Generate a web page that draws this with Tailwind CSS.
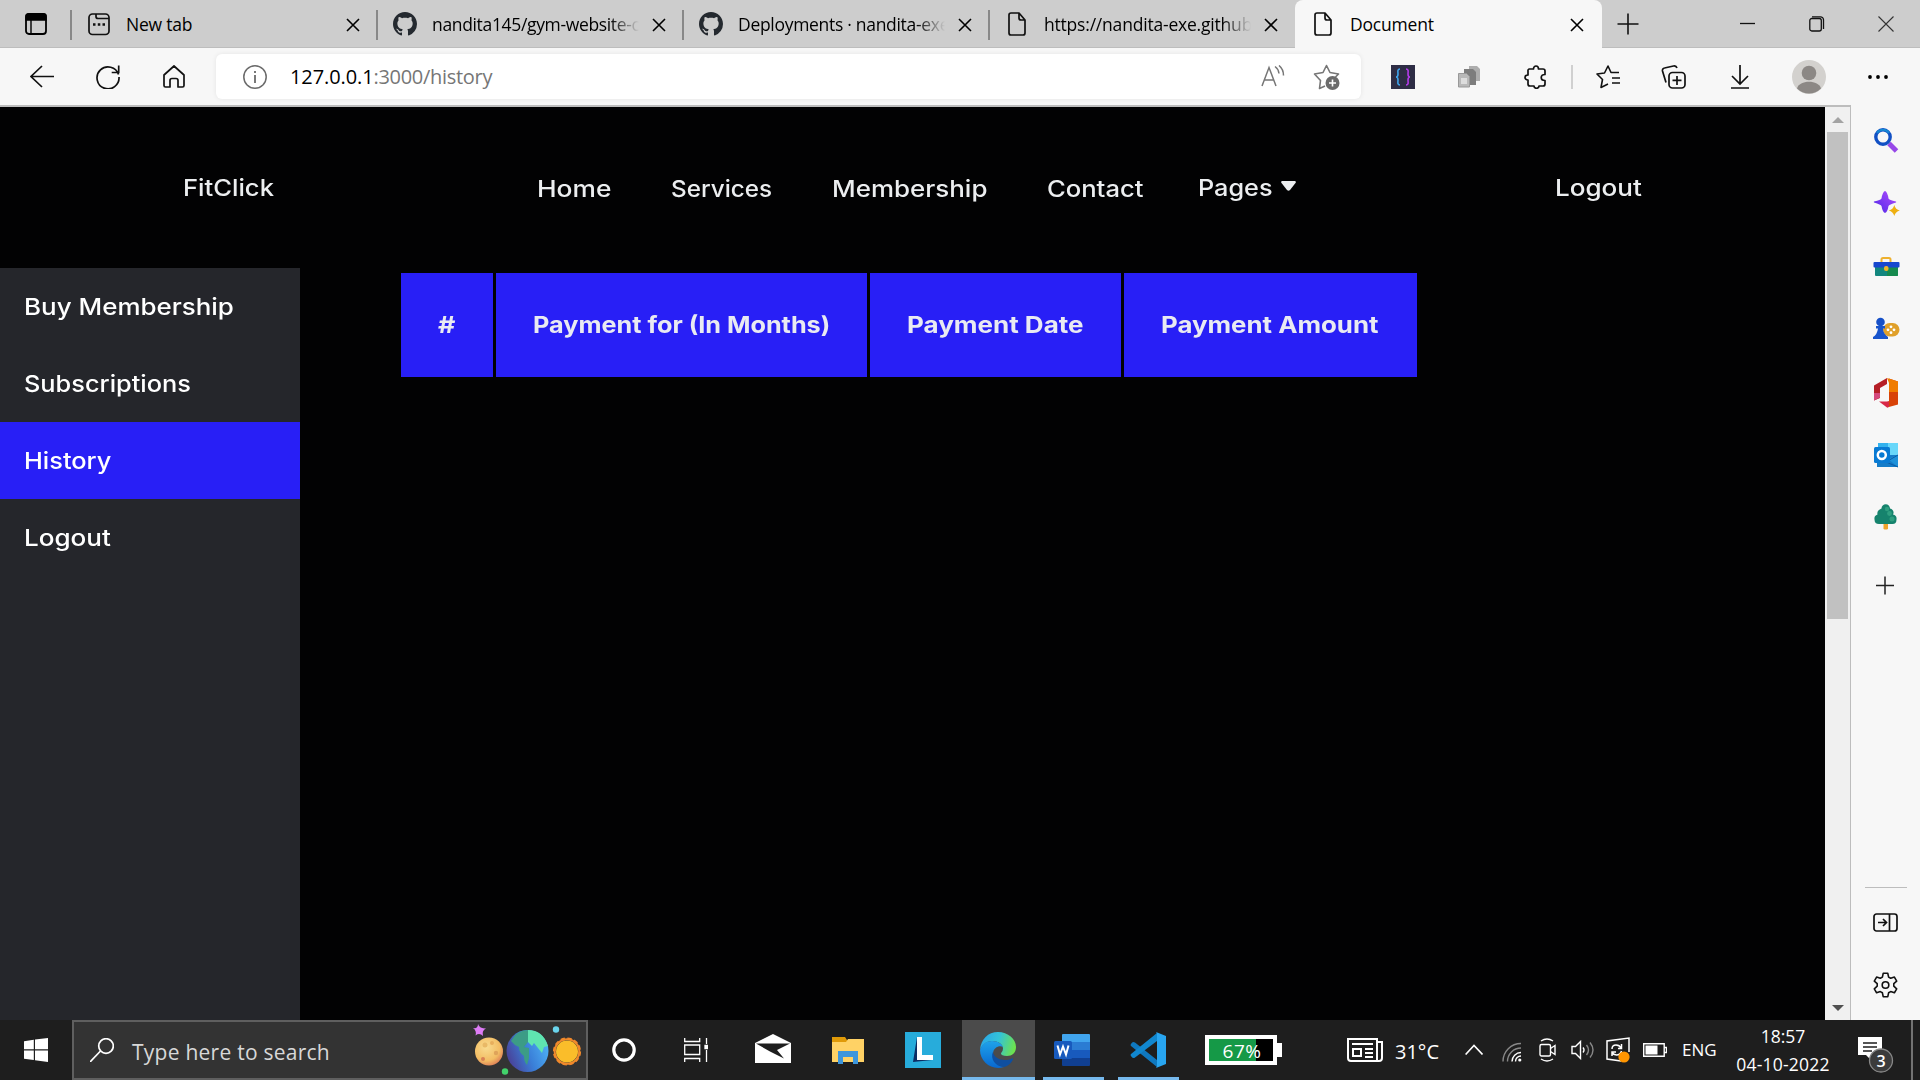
<!DOCTYPE html>
<html lang="en">
<head>
<meta charset="utf-8">
<title>Document</title>
<script src="https://cdn.jsdelivr.net/npm/@tailwindcss/browser@4"></script>
</head>
<body class="w-[1920px] h-[1080px] overflow-hidden bg-[#f7f7f7] flex flex-col font-['Open_Sans',sans-serif] text-black">
<svg class="hidden">
  <symbol id="x" viewBox="0 0 14 14"><path d="M1 1l12 12M13 1L1 13" stroke="currentColor" stroke-width="1.6" fill="none"/></symbol>
  <symbol id="gh" viewBox="0 0 16 16"><path fill="#24292f" d="M8 0C3.58 0 0 3.58 0 8c0 3.54 2.29 6.53 5.47 7.59.4.07.55-.17.55-.38 0-.19-.01-.82-.01-1.49-2.01.37-2.53-.49-2.69-.94-.09-.23-.48-.94-.82-1.13-.28-.15-.68-.52-.01-.53.63-.01 1.08.58 1.23.82.72 1.21 1.87.87 2.33.66.07-.52.28-.87.51-1.07-1.78-.2-3.64-.89-3.64-3.95 0-.87.31-1.59.82-2.15-.08-.2-.36-1.02.08-2.12 0 0 .67-.21 2.2.82.64-.18 1.32-.27 2-.27.68 0 1.36.09 2 .27 1.53-1.04 2.2-.82 2.2-.82.44 1.1.16 1.92.08 2.12.51.56.82 1.27.82 2.15 0 3.07-1.87 3.75-3.65 3.95.29.25.54.73.54 1.48 0 1.07-.01 1.93-.01 2.2 0 .21.15.46.55.38A8.013 8.013 0 0016 8c0-4.42-3.58-8-8-8z"/></symbol>
  <symbol id="doc" viewBox="0 0 24 24"><path d="M14 1H6a2 2 0 0 0-2 2v18a2 2 0 0 0 2 2h12a2 2 0 0 0 2-2V8zM14 1v5a2 2 0 0 0 2 2h4" stroke="#111" stroke-width="1.7" fill="none" stroke-linejoin="round"/></symbol>
</svg>

<!-- Tab strip -->
<div class="h-12 shrink-0 bg-[#cdcdcd] flex items-center border-b border-[#bdbdbd]">
  <svg class="w-6 h-6 ml-6 shrink-0" viewBox="0 0 24 24"><rect x="2" y="2" width="20" height="20" rx="3" fill="none" stroke="#000" stroke-width="1.8"/><path d="M2 8V4a2 2 0 0 1 2-2h16a2 2 0 0 1 2 2v4zM7 8v14" stroke="#000" stroke-width="1.4"/></svg>
  <div class="w-0.5 h-[30px] ml-[22px] bg-[#888] mt-0.5 shrink-0"></div>
  <div class="w-[304px] shrink-0 flex items-center pl-[15px]">
    <svg class="w-6 h-6 shrink-0" viewBox="0 0 24 24" fill="none" stroke="#111" stroke-width="1.7"><rect x="2" y="2" width="20" height="20.5" rx="3.5"/><path d="M9 2v2.500a2 2 0 0 0 2 2h11"/><path d="M6 12.500h2.500M10.800 12.500h2.500M15.500 12.500h2.500" stroke-width="2.600"/></svg>
    <div class="ml-[15px] w-[207px] overflow-hidden whitespace-nowrap text-[17.5px] leading-6 tracking-[-0.2px]">New tab</div>
    <svg class="w-3.5 h-3.5 ml-[13px] mt-0.5 shrink-0"><use href="#x"/></svg>
  </div>
  <div class="w-0.5 h-[30px] bg-[#888] mt-0.5 shrink-0"></div>
  <div class="w-[304px] shrink-0 flex items-center pl-[15px]">
    <svg class="w-6 h-6 shrink-0"><use href="#gh"/></svg>
    <div class="ml-[15px] w-[207px] overflow-hidden whitespace-nowrap text-[17.5px] leading-6 tracking-[-0.34px] [mask-image:linear-gradient(to_right,black_86%,transparent)]">nandita145/gym-website-c</div>
    <svg class="w-3.5 h-3.5 ml-[13px] mt-0.5 shrink-0"><use href="#x"/></svg>
  </div>
  <div class="w-0.5 h-[30px] bg-[#888] mt-0.5 shrink-0"></div>
  <div class="w-[304px] shrink-0 flex items-center pl-[15px]">
    <svg class="w-6 h-6 shrink-0"><use href="#gh"/></svg>
    <div class="ml-[15px] w-[207px] overflow-hidden whitespace-nowrap text-[17.5px] leading-6 tracking-[-0.3px] [mask-image:linear-gradient(to_right,black_86%,transparent)]">Deployments · nandita-exe</div>
    <svg class="w-3.5 h-3.5 ml-[13px] mt-0.5 shrink-0"><use href="#x"/></svg>
  </div>
  <div class="w-0.5 h-[30px] bg-[#888] mt-0.5 shrink-0"></div>
  <div class="w-[305px] shrink-0 flex items-center pl-[15px]">
    <svg class="w-6 h-6 shrink-0"><use href="#doc"/></svg>
    <div class="ml-[15px] w-[207px] overflow-hidden whitespace-nowrap text-[17.5px] leading-6 tracking-[-0.2px] [mask-image:linear-gradient(to_right,black_86%,transparent)]">https://nandita-exe.github</div>
    <svg class="w-3.5 h-3.5 ml-[13px] mt-0.5 shrink-0"><use href="#x"/></svg>
  </div>
  <div class="w-[307px] h-12 shrink-0 flex items-center pl-4 bg-[#f7f7f7] rounded-t-lg">
    <svg class="w-6 h-6 shrink-0"><use href="#doc"/></svg>
    <div class="ml-[15px] w-[207px] overflow-hidden whitespace-nowrap text-[17.5px] leading-6 tracking-[-0.2px]">Document</div>
    <svg class="w-3.5 h-3.5 ml-[13px] mt-0.5 shrink-0"><use href="#x"/></svg>
  </div>
  <svg class="w-[22px] h-[22px] ml-[15px] shrink-0" viewBox="0 0 22 22"><path d="M11 .5v21M.5 11h21" stroke="#111" stroke-width="1.600"/></svg>
  <svg class="w-4 h-4 ml-[101px] shrink-0" viewBox="0 0 16 16"><path d="M0 7.500h15" stroke="#111" stroke-width="1.300"/></svg>
  <svg class="w-4 h-4 ml-[53px] shrink-0" viewBox="0 0 16 16" fill="none" stroke="#111" stroke-width="1.300"><rect x=".8" y="2.500" width="11.500" height="12.500" rx="2"/><path d="M3 .8h8.500a3 3 0 0 1 3 3V13"/></svg>
  <svg class="w-4 h-4 ml-[53px] shrink-0" viewBox="0 0 16 16"><path d="M.5.5l15 15M15.500.5l-15 15" stroke="#333" stroke-width="1.100"/></svg>
</div>

<!-- Toolbar -->
<div class="h-[57px] shrink-0 bg-[#f7f7f7] flex items-center">
  <svg class="w-6 h-6 ml-[30px] shrink-0" viewBox="0 0 24 24" fill="none" stroke="#111" stroke-width="1.700"><path d="M24 11.500H1M12 1L1 11.500 12 22"/></svg>
  <svg class="w-6 h-6 ml-[42px] shrink-0" viewBox="0 0 24 24" fill="none" stroke="#111" stroke-width="1.700"><path d="M22.500 9.500A11 11 0 1 0 23 12M22.700.5v7h-7"/></svg>
  <svg class="w-6 h-6 ml-[42px] shrink-0" viewBox="0 0 24 24" fill="none" stroke="#111" stroke-width="1.700" stroke-linejoin="round"><path d="M2 10L12 1l10 9v10.500a1.500 1.500 0 0 1-1.500 1.500H16v-6.500a2 2 0 0 0-2-2h-4a2 2 0 0 0-2 2V22H3.500A1.500 1.500 0 0 1 2 20.500z"/></svg>
  <div class="w-[1145px] h-[45px] ml-[30px] shrink-0 bg-white rounded-md shadow-[0_0_5px_rgba(0,0,0,0.08)] flex items-center">
    <svg class="w-6 h-6 ml-[27px] shrink-0" viewBox="0 0 24 24" fill="none" stroke="#6b6b6b" stroke-width="1.500"><circle cx="12" cy="12" r="11.200"/><path d="M12 10v8M12 6v2" stroke-width="1.800"/></svg>
    <div class="ml-[23px] whitespace-nowrap text-[20px] leading-6 w-[960px] tracking-[-0.1px]">127.0.0.1<span class="text-[#767676] tracking-[-0.3px]">:3000/history</span></div>
    <svg class="w-[26px] h-6 ml-[10px] shrink-0" viewBox="0 0 26 24" fill="none" stroke="#767676" stroke-width="1.500"><path d="M2 21L9 2.500 16 21M4.500 15h9M15 1.500c2.500 1.800 3.700 4 4 7M19 .5c3 2.500 4.500 6 4.500 10"/></svg>
    <svg class="w-7 h-7 ml-[27px] shrink-0" viewBox="0 0 28 28" fill="none" stroke="#767676" stroke-width="1.600" stroke-linejoin="round"><path d="M12 23l-5.500 2.500 1-8L1.500 11l8.500-1.500L13.500 2.500l3.500 7 8.500 1.500-3 3"/><circle cx="19.500" cy="20" r="7" fill="#6b6b6b" stroke="none"/><path d="M19.500 16.500v7M16 20h7" stroke="#fff"/></svg>
  </div>
  <svg class="w-6 h-6 ml-[30px] shrink-0" viewBox="0 0 24 24" fill="none" stroke-width="1.600"><path fill="#2e2d45" d="M0 0h24v24H0z"/><path d="M9 4C6 4 7 7 7 9s-.5 3-2 3c1.500 0 2 1 2 3s-1 5 2 5" stroke="#3fa5ee"/><path d="M15 4c3 0 2 3 2 5s.5 3 2 3c-1.500 0-2 1-2 3s1 5-2 5" stroke="#b43bea"/></svg>
  <svg class="w-6 h-6 ml-[42px] shrink-0" viewBox="0 0 24 24"><path fill="#adadad" d="M12 1h8l3 3v12H12z"/><path fill="#7d7d7d" d="M7 4h9l3 3v13H7z"/><path fill="#b9b9b9" stroke="#999" d="M1.500 8.500h8l3 3v10.500h-11z"/><path fill="#ddd" d="M4 13h6v6H4z"/></svg>
  <svg class="w-6 h-6 ml-[43px] shrink-0" viewBox="0 0 24 24" fill="none" stroke="#111" stroke-width="1.700" stroke-linejoin="round"><path d="M5 4h4.500c0-4 5-4 5 0H19a2 2 0 0 1 2 2v3.500c-5 0-5 6 0 6V19a2 2 0 0 1-2 2h-4c0 3-5 3-5 0H6a2 2 0 0 1-2-2v-4c-4 0-4-5 0-5V5z"/></svg>
  <div class="w-0.5 h-6 ml-[23px] bg-[#d0d0d0] shrink-0"></div>
  <svg class="w-6 h-6 ml-[23px] shrink-0" viewBox="0 0 24 24" fill="none" stroke="#111" stroke-width="1.600" stroke-linejoin="round"><path d="M12 19l-7 3.500 1.500-8L1 9l7.500-1L12 1l3 6.500h8M16 13h8M16 18h8"/></svg>
  <svg class="w-[26px] h-6 ml-[41px] shrink-0" viewBox="0 0 26 24" fill="none" stroke="#111" stroke-width="1.700"><rect x="8" y="7.500" width="16" height="15.500" rx="3.500"/><path d="M16 11v9M11.500 15.300h9M5 17.500L1.500 6a2.500 2.500 0 0 1 2-3l9-2a3 3 0 0 1 3.500 2"/></svg>
  <svg class="w-5 h-6 ml-[43px] shrink-0" viewBox="0 0 20 24" fill="none" stroke="#111" stroke-width="1.700"><path d="M10 0v18M2 11l8 8 8-8M1 23h18"/></svg>
  <svg class="w-[34px] h-[34px] ml-[42px] shrink-0" viewBox="0 0 34 34"><circle cx="17" cy="17" r="17" fill="#d3d1ce"/><circle cx="17" cy="13" r="7.300" fill="#8c8885"/><path d="M5 28.500c2-9 22-9 24 0a17 17 0 0 1-24 0z" fill="#8c8885"/></svg>
  <svg class="w-6 h-6 ml-[40px] shrink-0" viewBox="0 0 24 24"><circle cx="4" cy="12" r="1.900"/><circle cx="12" cy="12" r="1.900"/><circle cx="20" cy="12" r="1.900"/></svg>
</div>

<!-- Page area and side panel -->
<div class="h-[915px] shrink-0 flex">
  <div class="w-[1851px] shrink-0 border-t-2 border-r border-[#bdbdbd] flex">
    <main class="w-[1825px] shrink-0 bg-[#020203] font-['Inter',sans-serif] text-[23px] leading-8 font-medium whitespace-nowrap">
      <nav class="h-[161px] flex pt-[65px] pl-[183px] text-[#eceef0]">
        <a class="w-[354px]"><span class="inline-block origin-left scale-x-[1.112]">FitClick</span></a>
        <a class="w-[134px] pt-px"><span class="inline-block origin-left scale-x-[1.145]">Home</span></a>
        <a class="w-[161px] pt-px"><span class="inline-block origin-left scale-x-[1.055]">Services</span></a>
        <a class="w-[215px] pt-px"><span class="inline-block origin-left scale-x-[1.128]">Membership</span></a>
        <a class="w-[151px] pt-px"><span class="inline-block origin-left scale-x-[1.112]">Contact</span></a>
        <a class="w-[83px]"><span class="inline-block origin-left scale-x-[1.098]">Pages</span></a>
        <svg class="w-[15px] h-[10px] mt-[9px]" viewBox="0 0 15 10"><path fill="#eceef0" d="M1 0h13q1.500.5.500 2L9 9q-1.500 1.500-3 0L.5 2Q-.5.500 1 0z"/></svg>
        <a class="ml-[259px]"><span class="inline-block origin-left scale-x-[1.133]">Logout</span></a>
      </nav>
      <div class="flex">
        <aside class="w-[300px] h-[752px] bg-[#25262b] text-white shrink-0">
          <a class="h-[77px] pl-6 flex items-center"><span class="inline-block origin-left scale-x-[1.128]">Buy Membership</span></a>
          <a class="h-[77px] pl-6 flex items-center"><span class="inline-block origin-left scale-x-[1.102]">Subscriptions</span></a>
          <a class="h-[77px] pl-6 flex items-center bg-[#281ff6]"><span class="inline-block origin-left scale-x-[1.102]">History</span></a>
          <a class="h-[77px] pl-6 flex items-center"><span class="inline-block origin-left scale-x-[1.133]">Logout</span></a>
        </aside>
        <div class="ml-[101px] mt-[5px] h-[104px] flex gap-[3px] font-bold text-[#e9eaf2]">
          <div class="w-[92px] bg-[#281ff6] pl-[37px] flex items-center"><span class="inline-block origin-left scale-x-[1.167]">#</span></div>
          <div class="w-[371px] bg-[#281ff6] pl-[37px] flex items-center"><span class="inline-block origin-left scale-x-[1.097]">Payment for (In Months)</span></div>
          <div class="w-[251px] bg-[#281ff6] pl-[37px] flex items-center"><span class="inline-block origin-left scale-x-[1.13]">Payment Date</span></div>
          <div class="w-[293px] bg-[#281ff6] pl-[37px] flex items-center"><span class="inline-block origin-left scale-x-[1.123]">Payment Amount</span></div>
        </div>
      </div>
    </main>
    <div class="w-[25px] shrink-0 bg-[#f0f0f0] flex flex-col items-center">
      <svg class="w-3 h-1.5 mt-2.5 shrink-0" viewBox="0 0 12 6"><path fill="#a3a3a3" d="M6 0l6 6H0z"/></svg>
      <div class="w-[21px] h-[487px] mt-[9px] shrink-0 bg-[#c1c1c1]"></div>
      <svg class="w-3 h-1.5 mt-auto mb-[9px] shrink-0" viewBox="0 0 12 6"><path fill="#505050" d="M0 0h12L6 6z"/></svg>
    </div>
  </div>
  <div class="w-[69px] pt-[22px] pl-[21px] flex flex-col">
    <svg class="w-7 h-7 shrink-0" viewBox="0 0 28 28" fill="none"><path d="M17 16.500l7.500 7.500" stroke="#9748e8" stroke-width="5"/><circle cx="11" cy="10" r="7.200" stroke="#1150c4" stroke-width="3.400"/><path d="M5 6a7.200 7.200 0 0 1 12 0" stroke="#1687d2" stroke-width="2"/></svg>
    <svg class="w-7 h-7 mt-[35px] shrink-0" viewBox="0 0 28 28"><defs><linearGradient id="sp" x1="0" y1="1" x2="1" y2="0"><stop stop-color="#4b28e6"/><stop offset="1" stop-color="#b44dff"/></linearGradient></defs><path fill="url(#sp)" d="M13 1q2.500 1 3.500 7.500.5 1.500 7.500 3 .5.500 0 1-7 2-7.500 3.500-1 6-3.500 7-2.500-1-3.500-7Q9 14.500 2 12.500q-.5-.5 0-1 7-1.500 7.500-3Q10.500 2 13 1z"/><path fill="#eeb012" d="M22.300 15q1.200 4.500 5.500 5.500-4.300 1-5.500 5.500-1.200-4.500-5.500-5.500 4.300-1 5.500-5.500z"/></svg>
    <svg class="w-7 h-7 mt-[35px] shrink-0" viewBox="0 0 28 28"><path d="M9.500 9V6.500q0-1.500 1.500-1.500h6q1.500 0 1.500 1.500V9" fill="none" stroke="#eeb12f" stroke-width="2"/><path d="M3 13h23v9q0 1-1 1H4q-1 0-1-1z" fill="#12867e"/><path d="M15 13h11v9q0 1-1 1H15z" fill="#168a4e"/><rect x="1.500" y="9" width="26" height="5.500" rx="1" fill="#1747ce"/><rect x="12" y="13" width="4.500" height="5" rx="2" fill="#f0b429"/></svg>
    <svg class="w-7 h-7 mt-[35px] shrink-0" viewBox="0 0 28 28"><rect x="11" y="7" width="16.500" height="13.500" rx="6.700" fill="#e0a02a"/><g fill="#fff"><circle cx="19" cy="10.800" r="1.400"/><circle cx="19" cy="16.700" r="1.400"/><circle cx="16" cy="13.800" r="1.400"/><circle cx="22" cy="13.800" r="1.400"/></g><circle cx="8.500" cy="6" r="4.300" fill="#1650c8"/><path d="M4 10h9v2.500h-2q0 5 5 8.500v2H1v-2q4-2 5-8.500H4z" fill="#1854cc"/></svg>
    <svg class="w-7 h-8 mt-[33px] shrink-0" viewBox="0 0 28 32"><path fill="#b51f26" d="M2 8.500L15 1v6l-7 4v10l-6 2.500z"/><path fill="#d4497c" d="M2 16h6v4.500l-6 3z"/><path fill="#d84208" d="M17 1.500L26 4.500v23L15 30.500V25l2-1z"/><path fill="#f07c00" d="M15 1l11 3.500V15h-9V6z"/><path fill="#d82847" d="M7 24.500h10v5.500l-2 .5z"/></svg>
    <svg class="w-7 h-7 mt-[33px] shrink-0" viewBox="0 0 28 28"><path fill="#33b2ee" d="M6 1h20v24H6z"/><path fill="#68d7fa" d="M16 1h10v12H16z"/><path fill="#157cc8" d="M5 13h21v12H5z"/><path d="M26 13v12L16 17z" fill="#1d91da"/><path d="M26 13L14 20l12 5" fill="none" stroke="#0a5ba6"/><rect x="2" y="5" width="16" height="16" rx="1.500" fill="#087ad3"/><circle cx="9.800" cy="13" r="4" fill="none" stroke="#fff" stroke-width="2.500"/></svg>
    <svg class="w-7 h-7 mt-[34px] shrink-0" viewBox="0 0 28 28"><path d="M11.500 19h4.500v6q-2.500 1-4.500 0z" fill="#f0a42b"/><path fill="#16836d" d="M9.500 4.500a4.200 4.200 0 0 1 8.500 0 4 4 0 0 1 3 6 4.500 4.500 0 0 1 3.500 5q0 4.500-4 4.500h-13.500q-4.500 0-4.500-4.500a4.500 4.500 0 0 1 3-5q-1-4 4-6z"/><g fill="#2f9f80"><circle cx="15" cy="5" r="2.200"/><circle cx="17.500" cy="9.500" r="2.400"/><circle cx="20" cy="15" r="2.500"/></g></svg>
    <svg class="w-7 h-7 mt-[40px] shrink-0" viewBox="0 0 28 28"><path d="M13 4.500v18M4 13.500h18" stroke="#222" stroke-width="1.500"/></svg>
    <div class="w-[42px] h-px mt-[287px] -ml-[7px] bg-[#bdbdbd] shrink-0"></div>
    <svg class="w-7 h-7 mt-[20px] shrink-0" viewBox="0 0 28 28" fill="none" stroke="#111" stroke-width="1.700"><rect x="2" y="6" width="23" height="17" rx="2.500"/><path d="M17.500 6v17M6 14.500h8M11 11l3.500 3.500L11 18" /></svg>
    <svg class="w-7 h-7 mt-[35px] shrink-0" viewBox="0 0 28 28" fill="none" stroke="#111" stroke-width="1.600" stroke-linejoin="round"><path d="M11.200 2.300h4.600l.8 3.800 2.100 1.200 3.700-1.200 2.300 4-2.900 2.600v2.500l2.900 2.600-2.300 4-3.700-1.200-2.100 1.200-.8 3.900h-4.600l-.8-3.900-2.100-1.200-3.700 1.200-2.300-4 2.900-2.600v-2.500l-2.900-2.600 2.300-4 3.700 1.200 2.100-1.200z"/><circle cx="13.500" cy="14" r="3.300"/></svg>
  </div>
</div>

<!-- Taskbar -->
<div class="h-[60px] shrink-0 bg-[#1e1e1e] text-white flex items-center whitespace-nowrap">
  <svg class="w-6 h-6 ml-6 shrink-0" viewBox="0 0 24 24" fill="#fff"><path d="M0 3.200L9.800 1.800v9.500H0zM11 1.600L24 0v11.300H11zM0 12.500h9.800v9.600L0 20.700zM11 12.500h13V24l-13-1.700z"/></svg>
  <div class="w-[516px] h-[60px] ml-6 shrink-0 bg-[#333] border-2 border-[#5f5f5f] flex items-center">
    <svg class="w-6 h-6 ml-4 shrink-0" viewBox="0 0 24 24" fill="none" stroke="#fff" stroke-width="1.700"><circle cx="16" cy="8" r="7.300"/><path d="M10.500 13L0 24"/></svg>
    <div class="ml-[18px] w-[340px] text-[21px] leading-7 text-[#d8d8d8] pt-[3px] tracking-[0.25px]">Type here to search</div>
    <svg class="w-[110px] h-14 shrink-0" viewBox="0 0 110 56">
      <defs><radialGradient id="mo" cx=".4" cy=".35" r=".8"><stop stop-color="#f9dc90"/><stop offset=".6" stop-color="#f3bd64"/><stop offset="1" stop-color="#d35f4f"/></radialGradient><linearGradient id="ea" x1="0" y1=".7" x2="1" y2=".3"><stop stop-color="#4a3d94"/><stop offset=".5" stop-color="#3a7fd8"/><stop offset="1" stop-color="#4fb4f7"/></linearGradient></defs>
      <path fill="#dd7cf5" d="M6 2q1.500 4.500 8 4.500-4.500 2-3 7.500-3.500-3.500-7.500-.5Q5 9 1 6 6 7 6 2z"/>
      <circle cx="17" cy="29.500" r="14" fill="url(#mo)"/><circle cx="13" cy="23" r="2.500" fill="#e9b967"/><circle cx="20" cy="21" r="2" fill="#e8ae5c"/><circle cx="24" cy="31" r="2.200" fill="#dfa35a"/><circle cx="11" cy="37" r="2" fill="#d98154"/>
      <circle cx="55.500" cy="29" r="21" fill="url(#ea)"/><path fill="#3c9c86" d="M39 19q6-11 17-11v12l-4 5 5 1v10l-2 7q-3-3-3-9-5-3-5-9-5-2-8-6z"/><path fill="#5fe5b0" d="M56 8q15 0 20 16l-4 1-2 6-4-5-4-5-2 3-4-4z"/>
      <circle cx="84" cy="7.500" r="3.200" fill="#6ad4ec"/><circle cx="33" cy="49.500" r="3.200" fill="#42d26b"/>
      <circle cx="95" cy="29.500" r="12.300" fill="none" stroke="#f1892b" stroke-width="2"/><circle cx="95" cy="29.500" r="12.800" fill="none" stroke="#f1892b" stroke-width="2.600" stroke-dasharray="4.200 2.502"/><circle cx="95" cy="29.500" r="11" fill="#fabd2a"/>
    </svg>
  </div>
  <svg class="w-7 h-7 ml-[22px] shrink-0" viewBox="0 0 28 28"><circle cx="14" cy="14" r="10.200" fill="none" stroke="#fff" stroke-width="3.200"/></svg>
  <svg class="w-6 h-6 ml-[46px] shrink-0" viewBox="0 0 24 24" fill="none" stroke="#fff" stroke-width="1.300"><path d="M.7 0v3.500h15V0M.7 24v-3.500h15V24M.7 7h15v9.500H.7zM22.500 0v6M22.500 12v12"/><path d="M21 7.500h3v3h-3z" fill="#fff"/></svg>
  <svg class="w-9 h-[30px] ml-[47px] mb-0.5 shrink-0" viewBox="0 0 36 30"><path fill="#fff" d="M0 9L18 0l18 9v20H0z"/><path fill="#1e1e1e" d="M1 9.500h34l-13 6.500 7 8.500L15 17.500z"/></svg>
  <svg class="w-8 h-7 ml-[41px] shrink-0" viewBox="0 0 32 28"><path fill="#e09a08" d="M0 1h13l2 3v6H0z"/><path fill="#ffd265" d="M0 6h14l2-3h16v23H0z"/><path fill="#3d96dc" d="M6 15h20v13h-5v-7H11v7H6z"/></svg>
  <svg class="w-9 h-9 ml-[41px] shrink-0" viewBox="0 0 36 36"><path fill="#27acdb" d="M0 0h36v36H0z"/><path fill="#0c2d63" d="M12 5l-4 25 19-2-12-3z"/><path fill="#fff" d="M12 5h5v18h11v5H12z"/></svg>
  <div class="w-[73px] h-[60px] ml-[21px] shrink-0 bg-[#4b4b4b] border-b-[3px] border-[#76b9ed] flex justify-center pt-3 pr-0.5">
    <svg class="w-9 h-9" viewBox="0 0 36 36"><defs><linearGradient id="e1" x1="0" y1=".3" x2="1" y2=".5"><stop stop-color="#2aa5e8"/><stop offset=".5" stop-color="#33c3d8"/><stop offset="1" stop-color="#6ee24c"/></linearGradient><linearGradient id="e2" x1="0" y1="0" x2="0" y2="1"><stop stop-color="#1fa2ea"/><stop offset="1" stop-color="#0868d0"/></linearGradient></defs>
    <path fill="url(#e1)" d="M0 18C1 7 8 0 18 0c10 0 18 7 18 15 0 6-4 9-9 9-4 0-6-1-6-2.500 0-1 2-2 2-5C23 12 18 9 12 9 6 9 2 13 0 18z"/><path fill="url(#e2)" d="M0 18c2-6 6-9 12-9 6 0 10 3 11 6-3-2-10 0-10 7 0 8 6 12 11 13C12 39 0 30 0 18z"/><path fill="#0f4fa0" d="M13 20c-3 6 2 15 11 15 5-1 8-5 9-8 .5-1-.5-1-1-.6C24 30 14 27 13 20z"/></svg>
  </div>
  <div class="w-[61px] h-[60px] ml-2 shrink-0 border-b-[3px] border-[#76b9ed] flex justify-center pt-[14px] pr-[3px]">
    <svg class="w-[36px] h-8" viewBox="0 0 36 32"><path fill="#41a5ee" d="M8 1q0-1 1-1h26q1 0 1 1v7H8z"/><path fill="#2b7cd3" d="M8 8h28v8H8z"/><path fill="#185abd" d="M8 16h28v8H8z"/><path fill="#103f91" d="M8 24h28v7q0 1-1 1H9q-1 0-1-1z"/><rect y="7" width="18" height="18" rx="1.500" fill="#185abd"/><path d="M3.500 11.500L6 20.500l3-8 3 8 2.500-9" fill="none" stroke="#fff" stroke-width="2"/></svg>
  </div>
  <div class="w-[61px] h-[60px] ml-[14px] shrink-0 border-b-[3px] border-[#76b9ed] flex justify-center pt-3 pr-0.5">
    <svg class="w-9 h-9" viewBox="0 0 36 36"><path fill="#0f78bf" d="M1 12q1.500-3 4-1.500L27 28v7L1 14q-1-1 0-2z"/><path fill="#1187cf" d="M1 24q1.500 3 4 1.500L27 9V1L1 22q-1 1 0 2z"/><path fill="#28a5f0" d="M26 0l10 4v28l-10 4q1-1 1-3V3q0-2-1-3z"/></svg>
  </div>
  <div class="w-[72px] h-[30px] ml-[26px] shrink-0 border-4 border-white bg-black flex relative">
    <div class="w-[47px] bg-[#159947]"></div>
    <div class="absolute inset-0 text-center text-[19px] leading-[25px] tracking-[0.5px] pl-0.5">67%</div>
  </div>
  <div class="w-[5px] h-3.5 bg-white shrink-0"></div>
  <svg class="w-9 h-6 ml-[65px] shrink-0" viewBox="0 0 36 24" fill="none" stroke="#fff" stroke-width="2"><path d="M1 1h29v22H4a3 3 0 0 1-3-3zM30 4h5v16a3 3 0 0 1-3 3h-4M5 6h21M18 11h8M18 15h8M18 19h8"/><path d="M6 11h8v7H6z"/></svg>
  <div class="w-[48px] ml-[12px] text-[20px] leading-7 pt-[3px] shrink-0">31°C</div>
  <svg class="w-[18px] h-[11px] ml-[22px] mb-0.5 shrink-0" viewBox="0 0 18 11" fill="none" stroke="#fff" stroke-width="1.600"><path d="M.6 10.500L9 1.500l8.500 9"/></svg>
  <svg class="w-5 h-5 ml-[19px] shrink-0 mt-1" viewBox="0 0 20 20" fill="none" stroke-width="1.400"><path d="M1 19.500A18 18 0 0 1 19 1.500M5.500 19.500A13.500 13.500 0 0 1 19 6" stroke="#888"/><path d="M10 19.500A9 9 0 0 1 19 10.500M13.500 19.500A5.500 5.500 0 0 1 19 14" stroke="#fff"/><circle cx="17.800" cy="18" r="1.600" fill="#fff"/></svg>
  <svg class="w-[18px] h-6 ml-[17px] shrink-0" viewBox="0 0 18 24" fill="none" stroke="#fff" stroke-width="1.400"><rect x="1" y="6.500" width="10.500" height="11.500" rx="1.500"/><path d="M11.500 10.500l4.500-3v9l-4.500-3M2 3q6-4 12 0M2 21q6 4 12 0"/></svg>
  <svg class="w-6 h-5 ml-[14px] shrink-0" viewBox="0 0 24 20" fill="none" stroke-width="1.400"><path d="M1 6.500h3.500L9.500 1.500v17l-5-5H1zM12 7.500q2 2.500 0 5" stroke="#fff"/><path d="M15.500 5q4 5 0 10M19 2.500q6 7.500 0 15" stroke="#888"/></svg>
  <svg class="w-6 h-7 ml-[11px] mt-0.5 shrink-0" viewBox="0 0 24 28" fill="none" stroke="#fff" stroke-width="1.500"><path d="M15 24L1 22V4l22-3v14"/><path d="M6 12q0-4 4-4 3.500 0 5 3M15.500 7v4.500H12M15.500 14q-1 4-5 4-3 0-4.500-2.500M6 19v-4h4"/><circle cx="18" cy="20" r="5.600" fill="#ff9500" stroke="none"/></svg>
  <svg class="w-6 h-3.5 ml-[13px] shrink-0" viewBox="0 0 24 14"><path d="M.7.7h20.500v12.600H.7zM21.500 4.500h2v5h-2" fill="none" stroke="#fff" stroke-width="1.400"/><path fill="#fff" d="M2.500 2.500h12v9h-12z"/></svg>
  <div class="w-[36px] ml-[15px] text-[17px] leading-6 shrink-0">ENG</div>
  <div class="w-[104px] ml-[13px] h-[60px] flex flex-col items-center text-[17.5px] leading-7 pt-0.5 shrink-0"><span>18:57</span><span class="tracking-[0.2px]">04-10-2022</span></div>
  <svg class="w-9 h-9 ml-[23px] mt-2.5 shrink-0" viewBox="0 0 36 36"><path fill="#fff" d="M0 0h24v18H13v5l-5-5H0z"/><path d="M5 6h14M5 10h14M5 14h9" stroke="#1e1e1e" stroke-width="1.500"/><circle cx="23" cy="23.500" r="11.500" fill="#3b3b3b" stroke="#888" stroke-width="1.300"/><text x="23" y="29.500" text-anchor="middle" font-size="16" font-weight="600" fill="#fff">3</text></svg>
  <div class="w-0.5 h-[60px] ml-[17px] bg-[#737373] shrink-0"></div>
</div>
</body>
</html>
